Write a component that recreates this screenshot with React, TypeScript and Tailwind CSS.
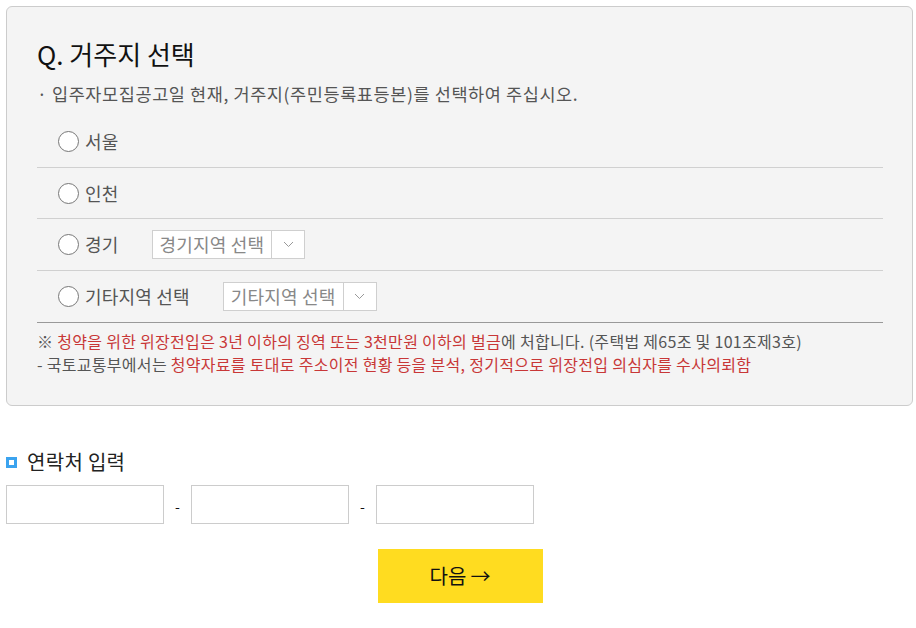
import React from "react";

const font = { fontFamily: '"Noto Sans CJK KR", "Noto Sans", sans-serif' };

function Radio() {
  return (
    <span className="inline-block w-[21px] h-[21px] rounded-full border border-[#777] bg-white shrink-0" />
  );
}

function Select({ label }: { label: string }) {
  return (
    <div className="flex h-[29px] border border-[#cfcfcf] bg-white">
      <span className="px-[7px] text-[18px] leading-[27px] tracking-[0.2px] text-[#888] whitespace-nowrap">{label}</span>
      <span className="w-[33px] border-l border-[#cfcfcf] flex items-center justify-center">
        <svg width="11" height="7" viewBox="0 0 11 7" fill="none">
          <path d="M1 1l4.5 4.5L10 1" stroke="#999" strokeWidth="1" />
        </svg>
      </span>
    </div>
  );
}

export default function App() {
  const rows: { label: string; select?: string; h: string }[] = [
    { label: "서울", h: "h-[52px]" },
    { label: "인천", h: "h-[51px]" },
    { label: "경기", select: "경기지역 선택", h: "h-[52px]" },
    { label: "기타지역 선택", select: "기타지역 선택", h: "h-[52px]" },
  ];
  return (
    <div className="w-[916px] h-[628px] bg-white p-[6px] text-[#333]" style={font}>
      <div className="w-[907px] border border-[#cccccc] rounded-[6px] bg-[#f4f4f4] pl-[30px] pr-[29px] pt-[29px] pb-[29px]">
        <h2 className="text-[26px] leading-[36px] font-normal text-[#111]">Q. 거주지 선택</h2>
        <p className="mt-[10px] text-[17.5px] leading-[24px] tracking-[0.6px] text-[#555] whitespace-nowrap">· 입주자모집공고일 현재, 거주지(주민등록표등본)를 선택하여 주십시오.</p>
        <div className="mt-[10px]">
          {rows.map((r, i) => (
            <div
              key={r.label}
              className={
                "flex items-center pl-[21px] " +
                r.h +
                " " +
                (i === 3 ? "border-b border-[#999]" : "border-b border-[#d0d0d0]")
              }
            >
              <Radio />
              <span className="ml-[6px] text-[18px] tracking-[0.2px] text-[#555] whitespace-nowrap">{r.label}</span>
              {r.select && (
                <div className="ml-[33px]">
                  <Select label={r.select} />
                </div>
              )}
            </div>
          ))}
        </div>
        <div className="mt-[7px] text-[16px] leading-[23px] tracking-[0.3px] text-[#555] whitespace-nowrap">
          <p>
            ※ <span className="text-[#c83737]">청약을 위한 위장전입은 3년 이하의 징역 또는 3천만원 이하의 벌금</span>에 처합니다. (주택법 제65조 및 101조제3호)
          </p>
          <p>
            - 국토교통부에서는 <span className="text-[#c83737]">청약자료를 토대로 주소이전 현황 등을 분석, 정기적으로 위장전입 의심자를 수사의뢰함</span>
          </p>
        </div>
      </div>
      <div className="mt-[44px] flex items-center">
        <span className="w-[11px] h-[11px] bg-[#3ba3ef] flex items-center justify-center">
          <span className="w-[5px] h-[5px] bg-white" />
        </span>
        <span className="ml-[10px] text-[20px] leading-[24px] tracking-[0.3px] text-[#222]">연락처 입력</span>
      </div>
      <div className="mt-[11px] flex items-center">
        <input className="w-[158px] h-[39px] border border-[#cccccc] bg-white outline-none" />
        <span className="w-[27px] pt-[3px] text-center text-[14px] text-[#111]">-</span>
        <input className="w-[158px] h-[39px] border border-[#cccccc] bg-white outline-none" />
        <span className="w-[27px] pt-[3px] text-center text-[14px] text-[#111]">-</span>
        <input className="w-[158px] h-[39px] border border-[#cccccc] bg-white outline-none" />
      </div>
      <div className="mt-[25px] flex justify-center pl-[4px]">
        <button className="w-[165px] h-[54px] bg-[#ffdc20] text-[20px] text-[#111] flex items-center justify-center gap-[4px]">
          <span>다음</span>
          <span>→</span>
        </button>
      </div>
    </div>
  );
}
